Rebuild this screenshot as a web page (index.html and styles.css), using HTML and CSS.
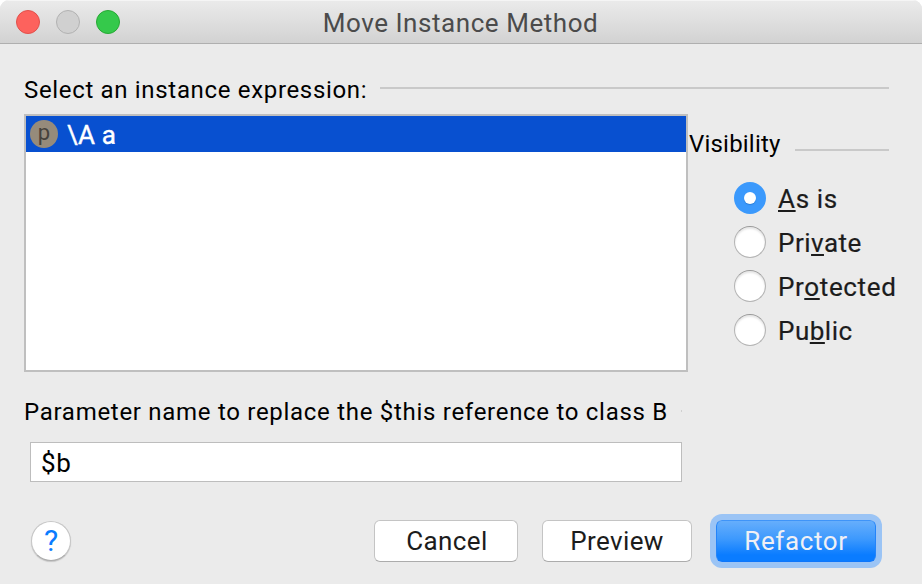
FILE: index.html
```html
<!DOCTYPE html>
<html lang="en">
<head>
<meta charset="utf-8">
<title>Move Instance Method</title>
<link rel="stylesheet" href="styles.css">
</head>
<body>
<div class="window">
  <header class="titlebar">
    <div class="lights">
      <span class="light close"></span>
      <span class="light minimize"></span>
      <span class="light maximize"></span>
    </div>
    <h1 class="title">Move Instance Method</h1>
  </header>
  <main class="content">
    <div class="separator main-separator"><span class="label">Select an instance expression:</span><span class="rule"></span></div>
    <div class="columns">
      <div class="list">
        <div class="row"><span class="badge">p</span><span class="row-text">\A a</span></div>
      </div>
      <section class="visibility">
        <div class="separator"><span class="label">Visibility</span><span class="rule"></span></div>
        <div class="options">
          <div class="option"><span class="radio checked"></span><span class="option-text"><u>A</u>s is</span></div>
          <div class="option"><span class="radio"></span><span class="option-text">Pri<u>v</u>ate</span></div>
          <div class="option"><span class="radio"></span><span class="option-text">Pr<u>o</u>tected</span></div>
          <div class="option"><span class="radio"></span><span class="option-text">Pu<u>b</u>lic</span></div>
        </div>
      </section>
    </div>
    <div class="separator param-separator"><span class="label">Parameter name to replace the $this reference to class B</span><span class="rule"></span></div>
    <div class="field">$b</div>
    <footer class="footer">
      <button class="help" type="button">?</button>
      <div class="buttons">
        <button class="button cancel" type="button">Cancel</button>
        <button class="button preview" type="button">Preview</button>
        <button class="button primary" type="button">Refactor</button>
      </div>
    </footer>
  </main>
</div>
</body>
</html>
```
FILE: styles.css
```css
* { box-sizing: border-box; }
body {
  margin: 0;
  background: #fff;
  font-family: Roboto, "Liberation Sans", sans-serif;
  color: #000;
}
.window {
  width: 922px;
  height: 584px;
  display: flex;
  flex-direction: column;
  overflow: hidden;
  background: #ebebeb;
  border-radius: 9px 9px 0 0;
}
.titlebar {
  height: 44px;
  flex: none;
  display: grid;
  grid-template-columns: 1fr auto 1fr;
  align-items: center;
  padding: 0 0 0 16px;
  background: linear-gradient(#ebebeb, #d2d2d2);
  border-bottom: 1px solid #afafaf;
  box-shadow: inset 0 1px #f5f5f5;
}
.lights { display: flex; gap: 16px; }
.light { width: 24px; height: 24px; border-radius: 50%; border: 1px solid; }
.close { background: #fd625d; border-color: #e2504b; }
.minimize { background: #d0d0d0; border-color: #b2b2b2; }
.maximize { background: #35c94b; border-color: #27a934; }
.title {
  margin: 0 0 0 -17px;
  padding-top: 2px;
  font-size: 26px;
  line-height: 32px;
  font-weight: 400;
  letter-spacing: 0.55px;
  color: #4b4b4b;
  white-space: nowrap;
}
.content { flex: 1; padding: 30px 0 0 24px; }
.separator { display: flex; align-items: center; height: 30px; font-size: 24px; }
.label { line-height: 30px; white-space: nowrap; letter-spacing: 0.67px; }
.rule { flex: 1; height: 2px; margin-left: 13px; background: #c9c9c9; }
.main-separator { width: 865px; }
.main-separator .label { padding-top: 2px; }
.main-separator .rule { margin-top: -2px; }
.columns { display: flex; margin-top: 10px; }
.list { width: 664px; height: 258px; flex: none; border: 2px solid #bfbfbf; background: #fff; }
.row {
  display: flex;
  align-items: center;
  height: 36px;
  padding-left: 4px;
  background: #0850d0;
  color: #fff;
  font-size: 26px;
}
.badge {
  width: 28px;
  height: 28px;
  border-radius: 50%;
  background: #968b7b;
  color: #46423c;
  font-size: 22px;
  line-height: 25px;
  text-align: center;
}
.row-text { margin-left: 9px; line-height: 36px; padding-top: 2px; letter-spacing: 0.2px; -webkit-text-stroke: 0.4px; }
.visibility { flex: 1; padding-top: 15px; }
.visibility .separator { width: 201px; padding-left: 1px; }
.visibility .label { letter-spacing: 0.2px; }
.visibility .rule { margin: 12px 0 0 14px; }
.options { padding: 17px 0 0 46px; font-size: 26px; color: #1c1c1c; letter-spacing: 0.65px; }
.option { display: flex; align-items: center; height: 44px; gap: 12px; line-height: 32px; white-space: nowrap; }
.option-text { padding-top: 2px; -webkit-text-stroke: 0.2px; }
.option:nth-child(2) .option-text,
.option:nth-child(4) .option-text { letter-spacing: 0.5px; }
.option u { text-decoration: underline 2px; text-underline-offset: 2px; text-decoration-skip-ink: none; }
.radio {
  width: 32px;
  height: 32px;
  flex: none;
  border-radius: 50%;
  background: #fff;
  border: 1px solid #b4b4b4;
  border-top-color: #9a9a9a;
  box-shadow: inset 0 2px 2px #e6e6e6;
}
.checked {
  display: grid;
  place-items: center;
  border: 0;
  background: #3b99fc;
  box-shadow: none;
}
.checked::after {
  content: "";
  width: 12px;
  height: 12px;
  border-radius: 50%;
  background: #fff;
  box-shadow: 0 1px 1px #2b7fd8;
}
.param-separator { width: 658px; margin-top: 25px; }
.param-separator .label { letter-spacing: 0.71px; }
.param-separator .rule { margin-top: -2px; background: #d0d0d0; }
.field {
  width: 652px;
  height: 40px;
  margin: 15px 0 0 6px;
  padding-left: 10px;
  border: 1px solid #bdbdbd;
  background: #fff;
  font-size: 26px;
  line-height: 40px;
  letter-spacing: 0.6px;
}
.footer {
  display: flex;
  justify-content: space-between;
  margin-top: 38px;
  padding: 0 46px 0 7px;
}
button { font-family: inherit; padding: 0; }
.help {
  width: 40px;
  height: 40px;
  margin-top: 1px;
  border: 1px solid #c6c6c6;
  border-bottom-color: #adadad;
  border-radius: 50%;
  background: #fff;
  box-shadow: 0 1px 1px #c4c4c4;
  color: #0a7cff;
  font-size: 30px;
  line-height: 38px;
}
.buttons { display: flex; gap: 24px; }
.button {
  height: 42px;
  border: 1px solid #c4c4c4;
  border-bottom-color: #acacac;
  border-radius: 6px;
  background: #fff;
  color: #1c1c1c;
  font-size: 26px;
  line-height: 40px;
  letter-spacing: 0.4px;
}
.cancel { width: 144px; padding-left: 2px; }
.preview { width: 150px; }
.primary {
  width: 160px;
  border-color: #3f94f8 #2384fa #0e76fb;
  background: linear-gradient(#66aefc, #3d99fd 45%, #0a7cff 85%);
  box-shadow: 0 0 0 6px #9bc4f5;
  color: #f0f0f5;
  letter-spacing: 0.6px;
}
```
